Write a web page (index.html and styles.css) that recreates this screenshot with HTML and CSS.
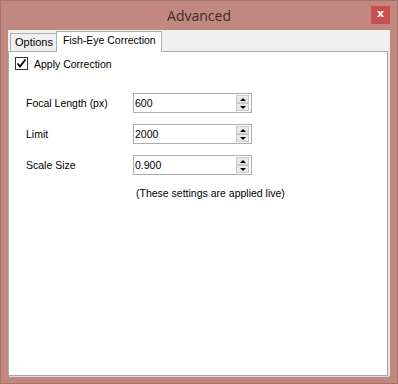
FILE: index.html
```html
<!DOCTYPE html>
<html lang="en">

<head>
  <meta charset="UTF-8">
  <meta name="viewport" content="width=device-width, initial-scale=1.0">
  <title>Advanced</title>
  <link rel="stylesheet" href="styles.css">
</head>

<body>
  <div class="window">
    <div class="titlebar">
      <span></span>
      <div class="title">Advanced</div>
      <div class="close-btn">x</div>
    </div>

    <div class="client">
      <div class="tabs">
        <div class="tab">Options</div>
        <div class="tab active">Fish-Eye Correction</div>
      </div>

      <div class="tab-panel">
        <label class="check-row">
          <span class="checkbox">
            <svg width="11" height="11" viewBox="0 0 11 11">
              <path d="M1.5 5.5 L4 8.5 L9.5 1.5" fill="none" stroke="#000" stroke-width="1.8" />
            </svg>
          </span>
          Apply Correction
        </label>

        <div class="settings">
          <div class="field-label">Focal Length (px)</div>
          <div class="spin-box">
            <span class="spin-value">600</span>
            <span class="spin-buttons"><span class="spin-up"></span><span class="spin-down"></span></span>
          </div>

          <div class="field-label">Limit</div>
          <div class="spin-box">
            <span class="spin-value">2000</span>
            <span class="spin-buttons"><span class="spin-up"></span><span class="spin-down"></span></span>
          </div>

          <div class="field-label">Scale Size</div>
          <div class="spin-box">
            <span class="spin-value">0.900</span>
            <span class="spin-buttons"><span class="spin-up"></span><span class="spin-down"></span></span>
          </div>
        </div>

        <p class="hint">(These settings are applied live)</p>
      </div>
    </div>
  </div>
</body>

</html>
```

FILE: styles.css
```css
body {
  margin: 0;
  font-family: "Liberation Sans", Arial, sans-serif;
  font-size: 10.5px;
  color: #000;
}

/* window frame */
.window {
  width: 398px;
  height: 384px;
  box-sizing: border-box;
  border: 1px solid #a7716c;
  background-color: #c1887f;
  display: flex;
  flex-direction: column;
}

.titlebar {
  height: 29px;
  display: grid;
  grid-template-columns: 1fr auto 1fr;
  align-items: start;
}

.title {
  font-family: "Open Sans", "Noto Sans", sans-serif;
  font-size: 14px;
  color: #3d2b2a;
  padding-top: 5px;
}

.close-btn {
  justify-self: end;
  width: 19px;
  height: 18px;
  margin: 5px 7px 0 0;
  background-color: #c84f4f;
  color: #fff;
  font-family: "DejaVu Sans", sans-serif;
  font-weight: bold;
  font-size: 11px;
  line-height: 16px;
  text-align: center;
}

/* client area */
.client {
  flex: 1;
  margin: 0 7px 7px 7px;
  padding: 1px 2px 0 0;
  background-color: #f0f0f0;
  display: flex;
  flex-direction: column;
}

.tabs {
  display: flex;
  align-items: flex-end;
  padding-left: 2px;
  height: 20px;
}

.tab {
  box-sizing: border-box;
  height: 18px;
  padding: 2px 3px 0 4px;
  border: 1px solid #adadad;
  border-bottom: none;
  background-color: #f0f0f0;
  font-size: 11px;
}

.tab.active {
  height: 21px;
  margin-left: -1px;
  margin-bottom: -1px;
  padding: 2px 5px 0 6px;
  background-color: #fff;
  font-size: 10.5px;
  position: relative;
}

.tab-panel {
  flex: 1;
  background-color: #fff;
  border: 1px solid #adadad;
  border-right-color: #a4a6b8;
  border-bottom-color: #a4a6b8;
  box-shadow: 1px 1px 0 #dcdcdc;
}

.check-row {
  display: flex;
  align-items: center;
  gap: 6px;
  margin: 5px 0 0 6px;
}

.checkbox {
  width: 11px;
  height: 11px;
  border: 1px solid #333;
  background-color: #fff;
  display: flex;
}

.settings {
  display: grid;
  grid-template-columns: 107px 119px;
  row-gap: 11px;
  align-items: center;
  margin: 23px 0 0 17px;
}

.spin-box {
  box-sizing: border-box;
  height: 20px;
  border: 1px solid #abadb3;
  display: flex;
  align-items: center;
  justify-content: space-between;
  padding: 1px 2px 1px 1px;
}

.spin-buttons {
  display: flex;
  flex-direction: column;
  width: 13px;
  height: 16px;
}

.spin-up,
.spin-down {
  flex: 1;
  box-sizing: border-box;
  border: 1px solid #c9c9c9;
  background-color: #eaeaea;
  position: relative;
}

.spin-up::after,
.spin-down::after {
  content: "";
  position: absolute;
  left: 3px;
  top: 2px;
  border-left: 3px solid transparent;
  border-right: 3px solid transparent;
}

.spin-up::after {
  border-bottom: 3px solid #000;
}

.spin-down::after {
  top: 2px;
  border-top: 3px solid #000;
}

.hint {
  margin: 12px 0 0 127px;
}
```
